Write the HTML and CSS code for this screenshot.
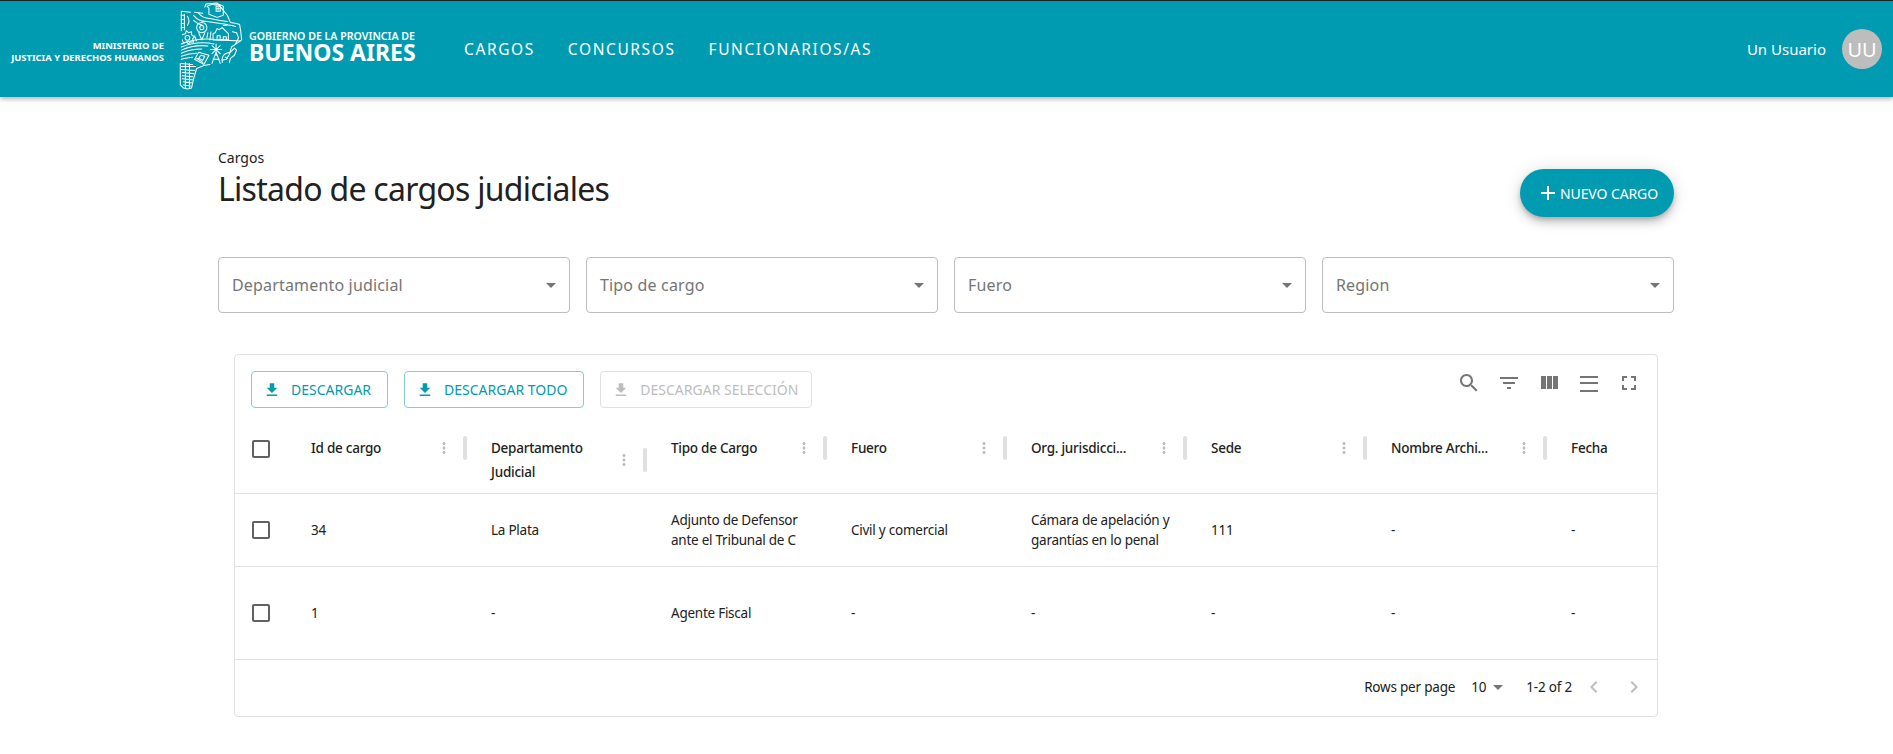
FILE: index.html
```html
<!DOCTYPE html>
<html lang="es">

<head>
    <meta charset="UTF-8" />
    <meta name="viewport" content="width=device-width, initial-scale=1.0" />
    <title>Listado de cargos judiciales</title>
    <link rel="stylesheet" href="styles.css">
</head>

<body>
    <svg class="sprite" aria-hidden="true">
        <symbol id="i-add" viewBox="0 0 24 24"><path d="M19 13h-6v6h-2v-6H5v-2h6V5h2v6h6v2z" /></symbol>
        <symbol id="i-drop" viewBox="0 0 24 24"><path d="M7 10l5 5 5-5z" /></symbol>
        <symbol id="i-save" viewBox="0 0 24 24"><path d="M19 9h-4V3H9v6H5l7 7 7-7zM5 18v2h14v-2H5z" /></symbol>
        <symbol id="i-search" viewBox="0 0 24 24"><path d="M15.5 14h-.79l-.28-.27C15.41 12.59 16 11.11 16 9.5 16 5.91 13.09 3 9.5 3S3 5.91 3 9.5 5.91 16 9.5 16c1.61 0 3.09-.59 4.23-1.57l.27.28v.79l5 4.99L20.49 19l-4.99-5zm-6 0C7.01 14 5 11.99 5 9.5S7.01 5 9.5 5 14 7.01 14 9.5 11.99 14 9.5 14z" /></symbol>
        <symbol id="i-filter" viewBox="0 0 24 24"><path d="M10 18h4v-2h-4v2zM3 6v2h18V6H3zm3 7h12v-2H6v2z" /></symbol>
        <symbol id="i-cols" viewBox="0 0 24 24"><path d="M10 18h5V5h-5v13zm-6 0h5V5H4v13zM16 5v13h5V5h-5z" /></symbol>
        <symbol id="i-density" viewBox="0 0 24 24"><path d="M3 21h18v-2H3v2zM3 13h18v-2H3v2zM3 5v2h18V5H3z" /></symbol>
        <symbol id="i-full" viewBox="0 0 24 24"><path d="M7 14H5v5h5v-2H7v-3zm-2-4h2V7h3V5H5v5zm12 7h-3v2h5v-5h-2v3zM14 5v2h3v3h2V5h-5z" /></symbol>
        <symbol id="i-more" viewBox="0 0 24 24"><path d="M12 8c1.1 0 2-.9 2-2s-.9-2-2-2-2 .9-2 2 .9 2 2 2zm0 2c-1.1 0-2 .9-2 2s.9 2 2 2 2-.9 2-2-.9-2-2-2zm0 6c-1.1 0-2 .9-2 2s.9 2 2 2 2-.9 2-2-.9-2-2-2z" /></symbol>
        <symbol id="i-check" viewBox="0 0 24 24"><path d="M19 5v14H5V5h14m0-2H5c-1.1 0-2 .9-2 2v14c0 1.1.9 2 2 2h14c1.1 0 2-.9 2-2V5c0-1.1-.9-2-2-2z" /></symbol>
        <symbol id="i-prev" viewBox="0 0 24 24"><path d="M15.41 7.41L14 6l-6 6 6 6 1.41-1.41L10.83 12z" /></symbol>
        <symbol id="i-next" viewBox="0 0 24 24"><path d="M10 6L8.59 7.41 13.17 12l-4.58 4.59L10 18l6-6z" /></symbol>
    </svg>

    <header class="topbar">
        <div class="brand">
            <div class="brand-ministry">MINISTERIO DE<br>JUSTICIA Y DERECHOS HUMANOS</div>
            <svg class="brand-map" viewBox="8 2 64 87">
                <!-- province outline, broken in places like the original mark -->
                <path d="M10 31V12l9 1M23 13l8 1M33 8l1-3 11-1 6 7 4 5 3 7 6 1 3 1 1 6 1 9-4 3-6 4-2 7-3 5-4 1M38 64l-6 1-7 3-3 10-2 9-4 1-4-1-3-3V63" />
                <!-- castle -->
                <path d="M35 7l2 2v6l8 3 6-2V7l-5-2-3 1-2-1zM44 7h4v5h-4z" />
                <path d="M46 8v3M44.500 9.500h3" stroke-width=".8" />
                <!-- band under the castle -->
                <path d="M22 16c3 4 8 6 13 6l20 3M27 14c3 4 7 5 11 5l10 2 7 1M22 21c3 3 6 4 9 5M51 26c4-1 8-1 12 1" />
                <!-- left strip -->
                <path d="M13 15v15M10 16h3M10 20h3M10 24h3M10 28h3M16 17c2 3 2 6 0 9" />
                <!-- gear -->
                <path d="M11 35l3-1 1-3 2 2 3-1v3l3 2-2 2 1 3-3 0-2 2-2-2-3 1-1-3" />
                <circle cx="16" cy="38" r="2.300" />
                <!-- bulb and stem -->
                <circle cx="30" cy="28" r="5" />
                <circle cx="30" cy="28" r="2" />
                <path d="M27 33l3 7 3-7M23 36l2 5M35 38l1-5" />
                <!-- house -->
                <path d="M41 40v-6l2-1 2-4 2 1 3-2 4 4 2 2v6zM45 40v-4h3v4M51 40v-3h3v3M38 40l1-8" />
                <path d="M60 32l4 1 2 5-3 6" />
                <!-- fields -->
                <path d="M10 44c10-4 24-6 36-4l22 1M10 47c10-4 22-5 32-3M10 50c9-4 18-5 26-4M10 53c7-3 13-4 20-4M10 56c5-2 10-3 15-3M10 59c4-1 7-2 11-2" />
                <!-- windmill -->
                <path d="M44 44v11M38.500 49.500h11M40 45.500l8 8M48 45.500l-8 8M44 52l-4 11M44 52l4 11M41 59h6" />
                <!-- cow -->
                <path d="M50 62c-1-4 1-8 4-9l4-1 4-4 2 2-2 5-4 3-1 4M53 57l2 1" />
                <!-- ploughed field -->
                <path d="M27 52l10 3-5 9-9-5zM29 55l4 1-2 4-4-2zM25 58l6 4M36 57l-4 7" />
                <!-- bottom stripes -->
                <path d="M10 63l11 1M10 66h14M10 69l13 1M11 72l11 1M11 75l10 1M11 78l10 1M12 81l8 1M12 84l7 1M14 62v25M18 63v24" />
            </svg>
            <div class="brand-gov">
                <span class="brand-gov-top">GOBIERNO DE LA PROVINCIA DE</span>
                <span class="brand-gov-name">BUENOS AIRES</span>
            </div>
        </div>
        <nav class="topnav">
            <a href="#">CARGOS</a>
            <a href="#">CONCURSOS</a>
            <a href="#">FUNCIONARIOS/AS</a>
        </nav>
        <div class="user">
            <span class="user-name">Un Usuario</span>
            <span class="avatar">UU</span>
        </div>
    </header>

    <main class="page">
        <section class="page-head">
            <div>
                <div class="crumb">Cargos</div>
                <h1 class="title">Listado de cargos judiciales</h1>
            </div>
            <button class="btn-new"><svg class="ico-add"><use href="#i-add" /></svg>NUEVO CARGO</button>
        </section>

        <section class="filters">
            <div class="select">Departamento judicial<svg class="ico-drop"><use href="#i-drop" /></svg></div>
            <div class="select">Tipo de cargo<svg class="ico-drop"><use href="#i-drop" /></svg></div>
            <div class="select">Fuero<svg class="ico-drop"><use href="#i-drop" /></svg></div>
            <div class="select">Region<svg class="ico-drop"><use href="#i-drop" /></svg></div>
        </section>

        <section class="card">
            <div class="toolbar">
                <div class="toolbar-btns">
                    <button class="btn-line"><svg class="ico-save"><use href="#i-save" /></svg>DESCARGAR</button>
                    <button class="btn-line"><svg class="ico-save"><use href="#i-save" /></svg>DESCARGAR TODO</button>
                    <button class="btn-line off"><svg class="ico-save"><use href="#i-save" /></svg>DESCARGAR SELECCIÓN</button>
                </div>
                <div class="toolbar-icons">
                    <svg><use href="#i-search" /></svg>
                    <svg><use href="#i-filter" /></svg>
                    <svg><use href="#i-cols" /></svg>
                    <svg><use href="#i-density" /></svg>
                    <svg><use href="#i-full" /></svg>
                </div>
            </div>

            <div class="grid grid-head">
                <div class="cell-check"><svg><use href="#i-check" /></svg></div>
                <div class="th">Id de cargo<span class="th-tools"><svg><use href="#i-more" /></svg><i></i></span></div>
                <div class="th th-tall"><span class="th-wrap">Departamento Judicial</span><span class="th-tools"><svg><use href="#i-more" /></svg><i></i></span></div>
                <div class="th">Tipo de Cargo<span class="th-tools"><svg><use href="#i-more" /></svg><i></i></span></div>
                <div class="th">Fuero<span class="th-tools"><svg><use href="#i-more" /></svg><i></i></span></div>
                <div class="th">Org. jurisdicci...<span class="th-tools"><svg><use href="#i-more" /></svg><i></i></span></div>
                <div class="th">Sede<span class="th-tools"><svg><use href="#i-more" /></svg><i></i></span></div>
                <div class="th">Nombre Archi...<span class="th-tools"><svg><use href="#i-more" /></svg><i></i></span></div>
                <div class="th">Fecha</div>
            </div>

            <div class="grid row-one">
                <div class="cell-check"><svg><use href="#i-check" /></svg></div>
                <div class="td">34</div>
                <div class="td">La Plata</div>
                <div class="td">Adjunto de Defensor ante el Tribunal de C</div>
                <div class="td">Civil y comercial</div>
                <div class="td">Cámara de apelación y garantías en lo penal</div>
                <div class="td">111</div>
                <div class="td">-</div>
                <div class="td">-</div>
            </div>

            <div class="grid row-two">
                <div class="cell-check"><svg><use href="#i-check" /></svg></div>
                <div class="td">1</div>
                <div class="td">-</div>
                <div class="td">Agente Fiscal</div>
                <div class="td">-</div>
                <div class="td">-</div>
                <div class="td">-</div>
                <div class="td">-</div>
                <div class="td">-</div>
            </div>

            <footer class="pager">
                <span>Rows per page</span>
                <span class="pager-size">10<svg><use href="#i-drop" /></svg></span>
                <span class="pager-count">1-2 of 2</span>
                <span class="pager-arrows">
                    <svg><use href="#i-prev" /></svg>
                    <svg><use href="#i-next" /></svg>
                </span>
            </footer>
        </section>
    </main>
</body>

</html>
```

FILE: styles.css
```css
:root {
    --teal: #009bb0;
    --txt: #212121;
    --line: #e0e0e0;
    --font: "Noto Sans", "Open Sans", sans-serif;
}

* {
    box-sizing: border-box;
    margin: 0;
    padding: 0;
}

body {
    font-family: var(--font);
    background: #fff;
    color: var(--txt);
    overflow: hidden;
}

svg {
    fill: currentColor;
    display: block;
}

.sprite {
    display: none;
}

/* header */
.topbar {
    display: flex;
    align-items: center;
    height: 97px;
    padding-right: 11px;
    background: var(--teal);
    border-top: 1px solid #1c2226;
    color: #fff;
    box-shadow: 0 2px 5px rgba(0, 0, 0, 0.3);
}

.brand {
    display: flex;
    align-items: center;
    width: 416px;
}

.brand-ministry {
    width: 164px;
    font-size: 9.4px;
    line-height: 12px;
    font-weight: 700;
    text-align: right;
    white-space: nowrap;
    margin-top: 6px;
    flex: none;
}

.brand-map {
    width: 66px;
    height: 89px;
    margin-left: 15px;
    margin-bottom: 7px;
    flex: none;
    fill: none;
    stroke: #fff;
    stroke-width: 1;
    stroke-linejoin: round;
    stroke-linecap: round;
}

.brand-gov {
    display: flex;
    flex-direction: column;
    margin-left: 4px;
    margin-bottom: 7px;
    white-space: nowrap;
}

.brand-gov-top {
    font-size: 10.6px;
    line-height: 13px;
    font-weight: 600;
}

.brand-gov-name {
    font-size: 23px;
    line-height: 19px;
    font-weight: 700;
}

.topnav {
    display: flex;
    gap: 33px;
    margin-left: 48px;
    flex: 1;
}

.topnav a {
    color: #fff;
    text-decoration: none;
    font-size: 15.5px;
    letter-spacing: 1.6px;
}

.user {
    display: flex;
    align-items: center;
    gap: 16px;
}

.user-name {
    font-size: 15px;
}

.avatar {
    display: flex;
    align-items: center;
    justify-content: center;
    width: 40px;
    height: 40px;
    border-radius: 50%;
    background: #bdbdbd;
    font-size: 20px;
}

/* page */
.page {
    padding: 0 219px 0 218px;
}

.page-head {
    display: flex;
    justify-content: space-between;
    padding-top: 51px;
    height: 160px;
}

.crumb {
    font-size: 14px;
    line-height: 20px;
    margin-bottom: 1px;
}

.title {
    font-size: 32px;
    line-height: 40px;
    font-weight: 400;
    letter-spacing: -0.72px;
}

.btn-new {
    display: flex;
    align-items: center;
    align-self: flex-start;
    margin-top: 21px;
    height: 48px;
    width: 154px;
    padding-left: 16px;
    border: 0;
    border-radius: 24px;
    background: var(--teal);
    color: #fff;
    font: 14px var(--font);
    letter-spacing: -0.1px;
    box-shadow: 0 3px 5px -1px rgba(0, 0, 0, 0.2), 0 6px 10px 0 rgba(0, 0, 0, 0.14), 0 1px 18px 0 rgba(0, 0, 0, 0.12);
}

.ico-add {
    width: 24px;
    height: 24px;
}

.filters {
    display: grid;
    grid-template-columns: repeat(4, 1fr);
    gap: 16px;
}

.select {
    display: flex;
    align-items: center;
    justify-content: space-between;
    height: 56px;
    padding: 0 6px 0 13px;
    border: 1px solid #bdbdbd;
    border-radius: 4px;
    font-size: 16px;
    letter-spacing: 0.17px;
    color: #757575;
}

.ico-drop {
    width: 24px;
    height: 24px;
    color: #757575;
}

/* table card */
.card {
    margin: 41px 16px 0;
    height: 363px;
    border: 1px solid var(--line);
    border-radius: 4px;
    overflow: hidden;
}

.toolbar {
    display: flex;
    justify-content: space-between;
    padding: 16px 16px 0 16px;
    height: 64px;
}

.toolbar-btns {
    display: flex;
    gap: 16px;
}

.btn-line {
    display: flex;
    align-items: center;
    height: 37px;
    padding: 0 16px 0 11px;
    border: 1px solid #7fcdd7;
    border-radius: 4px;
    background: #fff;
    color: var(--teal);
    font: 14px var(--font);
}

.btn-line.off {
    padding-right: 13px;
    border-color: #e0e0e0;
    color: #bdbdbd;
}

.ico-save {
    width: 18px;
    height: 18px;
    margin-right: 10px;
}

.toolbar-icons {
    display: flex;
    gap: 16px;
    color: #757575;
}

.toolbar-icons svg {
    width: 24px;
    height: 24px;
}

/* grid rows */
.grid {
    display: grid;
    grid-template-columns: 66px repeat(8, 180px);
    width: 1506px;
    font-size: 13.5px;
    letter-spacing: -0.25px;
    border-bottom: 1px solid var(--line);
}

.grid-head {
    height: 75px;
    font-weight: 500;
    align-items: start;
}

.row-one {
    height: 73px;
    align-items: center;
}

.row-two {
    height: 93px;
    align-items: center;
}

.cell-check {
    padding-left: 14px;
    color: #616161;
}

.cell-check svg {
    width: 24px;
    height: 24px;
}

.grid-head .cell-check {
    padding-top: 18px;
}

.th {
    display: flex;
    align-items: center;
    justify-content: space-between;
    height: 36px;
    margin-top: 11px;
    padding-left: 10px;
    white-space: nowrap;
}

.th-tall {
    height: 50px;
    margin-top: 16px;
}

.th-wrap {
    width: 110px;
    line-height: 24px;
    white-space: normal;
}

.th-tools {
    display: flex;
    align-items: center;
    margin-right: 14px;
    color: #bdbdbd;
}

.th-tools svg {
    width: 18px;
    height: 18px;
}

.th-tools i {
    display: block;
    width: 4px;
    height: 24px;
    margin-left: 10px;
    border-radius: 2px;
    background: #e0e0e0;
}

.td {
    padding: 0 28px 0 10px;
    line-height: 20px;
}

/* pager */
.pager {
    display: flex;
    align-items: center;
    justify-content: flex-end;
    height: 57px;
    padding: 0 11px 3px 0;
    font-size: 13.5px;
    letter-spacing: -0.2px;
}

.pager-size {
    display: flex;
    align-items: center;
    margin-left: 16px;
}

.pager-size svg {
    width: 24px;
    height: 24px;
    color: #757575;
}

.pager-count {
    margin-left: 16px;
}

.pager-arrows {
    display: flex;
    gap: 16px;
    margin-left: 10px;
    color: #bdbdbd;
}

.pager-arrows svg {
    width: 24px;
    height: 24px;
}
```
